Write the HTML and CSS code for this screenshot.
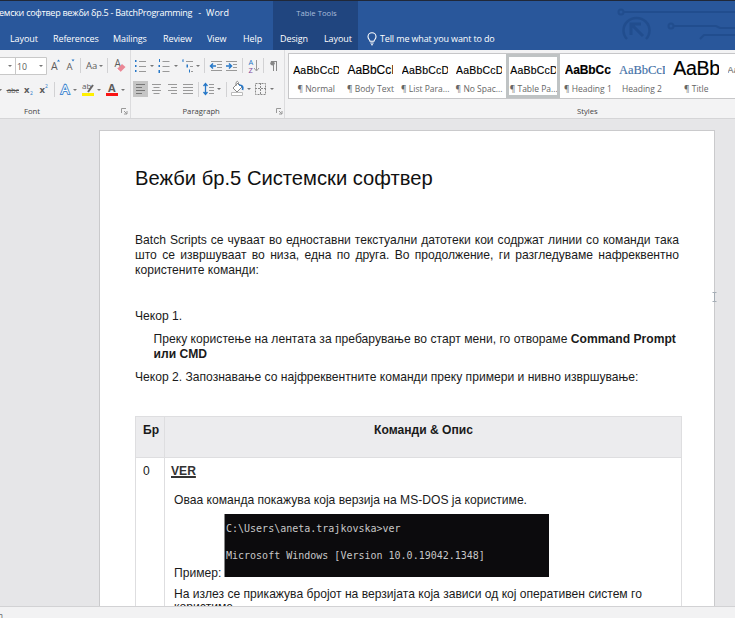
FILE: index.html
```html
<!DOCTYPE html>
<html lang="mk">
<head>
<meta charset="utf-8">
<title>BatchProgramming - Word</title>
<link rel="stylesheet" href="styles.css">
</head>
<body>
<div class="app">
  <header class="top">
    <svg class="circuit" width="120" height="47" viewBox="5 0 120 47" fill="none" stroke="#1d4886" stroke-width="2">
      <circle cx="11" cy="10" r="2.5"/><path d="M14 10H125"/>
      <circle cx="61" cy="24" r="2.500"/><path d="M64 24H106l4 2h15M90 37l4-4h31"/>
      <path d="M17 37a13 12.500 0 1 1 19 0" stroke-width="2.500"/><path d="M21 33V22H31M22 23l11 11" stroke-width="3"/>
    </svg>
    <div class="titlebar">
      <div class="doc-title"><span class="t-name">емски софтвер вежби бр.5 - BatchProgramming</span><span class="t-dash">-</span><span class="t-app">Word</span></div>
      <div class="tools-title">Table Tools</div>
    </div>
    <nav class="tabs">
      <span class="tab layout">Layout</span><span class="tab refs">References</span><span class="tab mail">Mailings</span><span class="tab review">Review</span><span class="tab view">View</span><span class="tab help">Help</span>
      <span class="ctx"><span class="tab design">Design</span><span class="tab layout2">Layout</span></span>
      <svg class="bulb" width="12" height="14" viewBox="0 0 12 14" fill="none" stroke="#fff" stroke-width="1.1"><path d="M4 9.3C3.8 7.7 2 7 2 4.8a4 4 0 0 1 8 0C10 7 8.200 7.700 8 9.300ZM4.300 11h3.400M5 12.700h2"/></svg>
      <span class="tab tell">Tell me what you want to do</span>
    </nav>
  </header>

  <section class="ribbon">
    <div class="group font">
      <div class="row">
        <svg width="130" height="20" viewBox="0 0 130 20">
          <path d="M-1 1.500H46.500V18.500H-1M15.500 1.500v17" fill="#fff" stroke="#c8c8c8"/>
          <path class="arr" d="M8 9h4l-2 2zM39 9h4l-2 2zM99 9h4l-2 2z"/>
          <text x="17" y="13.500" class="ic" font-size="9.500" textLength="10" lengthAdjust="spacingAndGlyphs">10</text>
          <text x="51" y="13.500" class="ic" font-size="10.500">A</text><path class="blu" d="M57 5.500l1.500-2 1.500 2z"/>
          <text x="66.500" y="13.500" class="ic" font-size="9.500">A</text><path class="blu" d="M71.500 3.500h3l-1.500 2z"/>
          <path class="sep" d="M80.500 2v15M107.500 2v15"/>
          <text x="86" y="13" class="ic" font-size="9.500">Aa</text>
          <text x="114.500" y="11" class="ic" font-size="10">A</text>
          <path d="M117 13l5-5 3.500 3-5 5z" fill="#ea8795"/><path d="M117 13l3.500 3" stroke="#fff"/>
        </svg>
      </div>
      <div class="row">
        <svg width="130" height="22" viewBox="0 0 130 22">
          <path class="arr" d="M-1 10h3l-1.500 2zM73 10h4l-2 2zM97 10h4l-2 2zM121 10h4l-2 2z"/>
          <text x="7" y="14" class="ic" font-size="7.500" textLength="12">abc</text><path d="M6.500 11.500H19" stroke="#555"/>
          <text x="24" y="14" class="ic b" font-size="9.500">x</text><text x="30" y="16" class="blu" font-size="5">2</text>
          <text x="39.500" y="14" class="ic b" font-size="9.500">x</text><text x="45" y="9" class="blu" font-size="5">2</text>
          <path class="sep" d="M54.500 3v15"/>
          <text x="61" y="15" font-size="13" fill="#fff" stroke="#4b8bd0" stroke-width="2" paint-order="stroke">A</text>
          <text x="82" y="10" class="ic" font-size="8">ab</text><path d="M93 6l-5 7" stroke="#666" stroke-width="2"/>
          <path d="M82 14h12v3H82z" fill="#fff000"/>
          <text x="108" y="12.500" class="ic b" font-size="11">A</text><path d="M106 14h12v3h-12z" fill="#fa1414"/>
        </svg>
      </div>
      <div class="label"><span class="l-font">Font</span><svg class="launch" width="7" height="7" viewBox="0 0 7 7"><path d="M.5 5V.5H5M3 3l3 3M6 3v3H3" fill="none" stroke="#999"/></svg></div>
    </div>
    <div class="group para">
      <div class="row">
        <svg width="153" height="20" viewBox="131 0 153 20">
          <path class="blu" d="M135 4h1.500v2h-1.500zM135 9h1.500v2h-1.500zM135 14h1.500v2h-1.500zM159 3h1v3H159zM158.500 9h1.500v2h-1.500zM158.500 14h1.500v3h-1.500z"/>
          <path class="ln" d="M139 5.500h7M139 10.500h7M139 15.500h7M162.500 5.500h7M162.500 10.500h7M162.500 15.500h7M186 5.500h7M190 10.500h3M191 15.500h2"/>
          <path class="blu" d="M182 4l1.500-1v3h-1V4.500zM186.500 8.500h1.500v3h-1.500zM189 13.500h1v3h-1z"/>
          <path class="arr" d="M150 9h4l-2 2zM174 9h4l-2 2zM196 9h4l-2 2z"/>
          <path class="sep" d="M204.500 2v15M242.500 2v15M263.500 2v15"/>
          <path class="ln" d="M211 5.500h11M217 8.500h5M217 11.500h5M211 14.500h11M226 5.500h11M233 8.500h4M233 11.500h4M226 14.500h11"/>
          <path d="M216 10h-5M213 7.500l-2.500 2.500 2.500 2.500M226 10h5M229 7.500l2.500 2.500-2.500 2.500" fill="none" stroke="#2778c8" stroke-width="1.500"/>
          <text x="248.500" y="9" class="blu" font-size="7.500">A</text><text x="248.500" y="16.500" fill="#81479b" font-size="7.500">Z</text>
          <path class="ln" d="M256.500 4v10.500M254 12l2.500 3 2.500-3"/>
          <path d="M273.500 15V5.500h3V15M271 5.500h6" fill="none" stroke="#888"/><circle cx="272.500" cy="7.300" r="2.200" fill="#888"/>
        </svg>
      </div>
      <div class="row">
        <svg width="153" height="22" viewBox="131 0 153 22">
          <path d="M133 2h15v16h-15z" fill="#c5c5c5"/>
          <path class="ln dark" d="M136 5.500h9M136 8.500h6M136 11.500h9M136 14.500h6"/>
          <path class="ln" d="M152 5.500h9M153.500 8.500h6M152 11.500h9M153.500 14.500h6M168 5.500h9M171 8.500h6M168 11.500h9M171 14.500h6M183 5.500h10M183 8.500h10M183 11.500h10M183 14.500h10"/>
          <path class="sep" d="M198.500 3v15M226.500 3v15"/>
          <path d="M205.500 5v10M203.500 7l2-2.500 2 2.500M203.500 13l2 2.500 2-2.500" fill="none" stroke="#2778c8" stroke-width="1.300"/>
          <path class="ln" d="M209 5.500h5M209 8.500h5M209 11.500h5M209 14.500h5"/>
          <path class="arr" d="M217 9h4l-2 2zM247 9h4l-2 2zM270 9h4l-2 2z"/>
          <path d="M233 9l5-5 4 4-5 5zM236 7V3.500q1.500-2.500 2.500 0V6" fill="#fff" stroke="#888"/><path d="M239 6q5 0 3.500 5" fill="none" stroke="#2778c8" stroke-width="1.700"/><path d="M231.500 13.500h11v3h-11z" fill="#fff" stroke="#bbb"/>
          <path d="M255.500 4.500h10v11h-10zM260.500 4v12M255 9.500h11" fill="none" stroke="#888" stroke-dasharray="2 1"/>
        </svg>
      </div>
      <div class="label"><span class="l-para">Paragraph</span><svg class="launch" width="7" height="7" viewBox="0 0 7 7"><path d="M.5 5V.5H5M3 3l3 3M6 3v3H3" fill="none" stroke="#999"/></svg></div>
    </div>
    <div class="group styles">
      <div class="gallery">
        <div class="style"><span class="smp">AaBbCcD</span><span class="nm">¶ Normal</span></div>
        <div class="style"><span class="smp body">AaBbCcI</span><span class="nm">¶ Body Text</span></div>
        <div class="style"><span class="smp">AaBbCcD</span><span class="nm">¶ List Para...</span></div>
        <div class="style"><span class="smp">AaBbCcD</span><span class="nm">¶ No Spac...</span></div>
        <div class="style selected"><span class="smp">AaBbCcD</span><span class="nm">¶ Table Pa...</span></div>
        <div class="style"><span class="smp h1">AaBbCc</span><span class="nm">¶ Heading 1</span></div>
        <div class="style"><span class="smp h2">AaBbCcI</span><span class="nm">Heading 2</span></div>
        <div class="style"><span class="smp ttl">AaBb</span><span class="nm">¶ Title</span></div>
        <div class="style"><span class="smp last">Aa</span></div>
      </div>
      <div class="label"><span class="l-styles">Styles</span></div>
    </div>
  </section>

  <main class="canvas">
    <article class="page">
      <h1>Вежби бр.5 Системски софтвер</h1>
      <div class="intro">
        <p class="just">Batch Scripts се чуваат во едноставни текстуални датотеки кои содржат линии со команди така</p>
        <p class="just">што се извршуваат во низа, една по друга. Во продолжение, ги разгледуваме нафреквентно</p>
        <p>користените команди:</p>
      </div>
      <p class="step1">Чекор 1.</p>
      <p class="indent">Преку користење на лентата за пребарување во старт мени, го отвораме <b>Command Prompt<br>или CMD</b></p>
      <p class="step2">Чекор 2. Запознавање со најфреквентните команди преку примери и нивно извршување:</p>
      <div class="table">
        <div class="th">Бр</div><div class="th center">Команди &amp; Опис</div>
        <div class="td">0</div>
        <div class="td wide">
          <p class="cmd">VER</p>
          <p class="desc">Оваа команда покажува која верзија на MS-DOS ја користиме.</p>
          <div class="example"><span>Пример:</span>
            <div class="console"><p>C:\Users\aneta.trajkovska&gt;ver</p><p>Microsoft Windows [Version 10.0.19042.1348]</p></div>
          </div>
          <p class="result">На излез се прикажува бројот на верзијата која зависи од кој оперативен систем го<br>користиме.</p>
        </div>
      </div>
    </article>
    <svg class="cursor" width="5" height="10" viewBox="0 0 5 10"><path d="M.5.500h4M.5 9.500h4M2.500 0v10" fill="none" stroke="#a5adb5"/></svg>
  </main>
  <footer class="status">n</footer>
</div>
</body>
</html>
```
FILE: styles.css
```css
* { box-sizing: border-box; }
body { margin: 0; overflow: hidden; font-family: "Open Sans", "Noto Sans", sans-serif; }
p, h1 { margin: 0; white-space: nowrap; }
.app { width: 735px; height: 618px; display: flex; flex-direction: column; background: #e6e6e8; }

.top { position: relative; height: 50px; flex: none; background: #29579b; border-top: 1px solid #202838; color: #fff; }
.circuit { position: absolute; right: 0; top: 1px; opacity: .6; }
.titlebar { height: 24px; display: flex; font-size: 9px; line-height: 24px; }
.doc-title { width: 273px; padding-right: 44px; display: flex; justify-content: flex-end; overflow: hidden; white-space: nowrap; }
.t-name { letter-spacing: -.27px; }
.t-dash { margin: 0 5px 0 6px; }
.tools-title { width: 85px; padding-left: 2px; text-align: center; background: #20457f; color: #a9bddb; font-size: 7.7px; }
.tabs { height: 25px; display: flex; font-size: 9px; line-height: 27px; white-space: nowrap; }
.tab { flex: none; letter-spacing: -.1px; }
.layout { margin-left: 10px; width: 43px; }
.refs { width: 60px; }
.mail { width: 50px; }
.review { width: 44px; }
.view { width: 36px; }
.help { width: 30px; }
.ctx { width: 85px; display: flex; background: #20457f; }
.design { width: 44px; padding-left: 7px; }
.layout2 { padding-left: 7px; }
.bulb { margin: 7px 2px 0 8px; }
.tell { letter-spacing: -.14px; }

.ribbon { height: 69px; flex: none; display: flex; background: #f3f3f4; border-bottom: 1px solid #d5d5d7; }
.group { height: 68px; flex: none; border-right: 1px solid #dcdcde; }
.font { width: 131px; }
.para { width: 154px; }
.styles { width: 450px; padding: 3px 0 0 3px; border: 0; }
.row { height: 22px; padding-top: 6px; }
.row + .row { height: 33px; padding-top: 7px; }
.row svg { display: block; }
.ic { fill: #5c5c5c; }
.b { font-weight: bold; }
.blu { fill: #2778c8; }
.arr { fill: #777; }
.ln { fill: none; stroke: #999; }
.dark { stroke: #777; }
.sep { stroke: #d2d2d4; }
.label { height: 12px; display: flex; align-items: center; font-size: 7.7px; line-height: 12px; color: #444; }
.l-font { margin-left: 24px; width: 97px; }
.l-para { margin-left: 51.5px; width: 93.5px; }
.styles .label { margin-top: 6px; }
.l-styles { margin-left: 289px; }
.launch { margin-top: 1px; }
.gallery { height: 46px; display: flex; overflow: hidden; background: #fff; border: 1px solid #c6c6c8; border-right: 0; }
.style { width: 54.3px; height: 44px; flex: none; padding: 7px 3.5px 0; overflow: hidden; }
.selected { padding: 4px .5px 0; border: 3px solid #bfc3c4; }
.smp { display: block; height: 17px; margin: 0 auto; width: 46px; font: 10.5px/18px "Liberation Sans", sans-serif; letter-spacing: .2px; color: #000; overflow: hidden; white-space: nowrap; -webkit-text-stroke: .15px; }
.body { font-size: 12px; letter-spacing: -.05px; }
.h1 { font-size: 12px; font-weight: bold; letter-spacing: -.1px; }
.h2 { font-family: "Liberation Serif", serif; font-size: 12.5px; letter-spacing: -.05px; color: #416fa6; }
.ttl { height: 19px; margin: -1px auto -1px; font-size: 19.5px; line-height: 17px; letter-spacing: -.3px; }
.last { font-size: 9px; color: #777; }
.nm { display: block; height: 18px; line-height: 21px; font-size: 8.5px; color: #666; text-align: center; white-space: nowrap; }

.canvas { position: relative; height: 487px; flex: none; padding: 11px 0 0 99px; overflow: hidden; }
.page { width: 616px; height: 500px; padding: 35px 0 0 35px; background: #fff; border: 1px solid #cacacc; font: 12.1px/15px "Liberation Sans", sans-serif; color: #1a1a1a; }
h1 { height: 67px; font-size: 20.2px; line-height: 25px; font-weight: normal; color: #111; }
.intro { width: 544px; height: 76px; }
.just { text-align: justify; text-align-last: justify; }
.step1 { height: 23px; }
.indent { height: 38px; padding-left: 18.5px; letter-spacing: .02px; }
.step2 { height: 46px; }
.table { width: 547px; display: grid; grid-template-columns: 28px 517px; grid-template-rows: 41px 200px; border: 1px solid #dedee0; }
.th { padding: 6px 0 0 7px; font-weight: bold; background: #ececee; border-bottom: 1px solid #dedee0; }
.th + .th, .wide { border-left: 1px solid #dedee0; }
.th.center { text-align: center; padding-left: 1px; }
.td { padding: 6px 0 0 7px; }
.td.wide { padding-left: 6px; }
.cmd { height: 29px; font-weight: bold; text-decoration: underline; text-decoration-thickness: 2px; color: #333; }
.desc { height: 21px; padding-left: 3px; }
.example { display: flex; align-items: flex-end; height: 64px; padding-left: 3px; line-height: 9px; }
.example span { width: 50px; }
.console { width: 325px; height: 63px; margin-bottom: 1px; padding: 8px 0 0 1px; background: #0c0b0d; border-left: 1px solid #888; color: #c8c8c8; font: 10px/14px "DejaVu Sans Mono", monospace; }
.console p + p { margin-top: 13px; }
.result { padding: 10px 0 0 3px; line-height: 13px; }
.cursor { position: absolute; left: 712px; top: 173px; }
.status { height: 12px; flex: none; background: #f2f2f3; border-top: 1px solid #d2d2d4; font-size: 8px; line-height: 15px; color: #555; overflow: hidden; text-indent: -2px; }
```
